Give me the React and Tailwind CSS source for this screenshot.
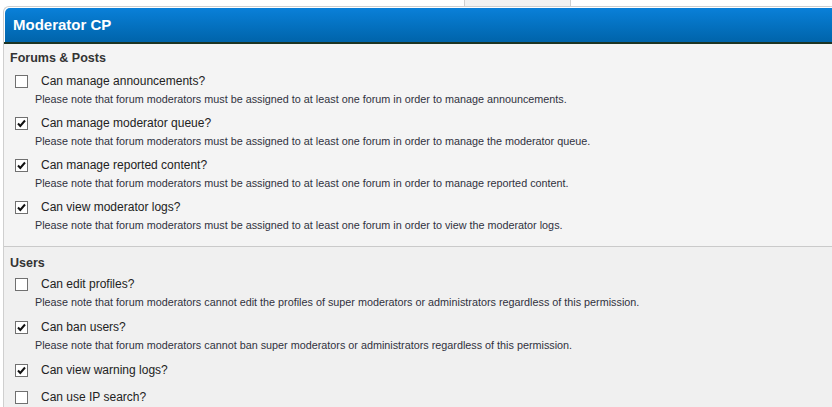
import React from "react";

function Box({ checked }) {
  return (
    <div className="w-[13px] h-[13px] border border-[#707070] bg-white shrink-0 flex items-center justify-center">
      {checked && (
        <svg width="11" height="11" viewBox="0 0 11 11">
          <path d="M2 5.5 L4.3 8 L9 2.5" fill="none" stroke="#111" strokeWidth="2" />
        </svg>
      )}
    </div>
  );
}

function Item({ label, desc, checked, gap }) {
  return (
    <div className={gap}>
      <div className="flex items-center h-[18px] pl-[11px]">
        <Box checked={checked} />
        <span className="ml-[13px] text-[12px] text-[#222]">{label}</span>
      </div>
      {desc && (
        <div className="h-[14px] mt-[2px] pl-[31px] text-[10.8px] leading-[14px] text-[#30323e]">{desc}</div>
      )}
    </div>
  );
}

const forum = [
  ["Can manage announcements?", "Please note that forum moderators must be assigned to at least one forum in order to manage announcements.", false],
  ["Can manage moderator queue?", "Please note that forum moderators must be assigned to at least one forum in order to manage the moderator queue.", true],
  ["Can manage reported content?", "Please note that forum moderators must be assigned to at least one forum in order to manage reported content.", true],
  ["Can view moderator logs?", "Please note that forum moderators must be assigned to at least one forum in order to view the moderator logs.", true],
];

const users = [
  ["Can edit profiles?", "Please note that forum moderators cannot edit the profiles of super moderators or administrators regardless of this permission.", false],
  ["Can ban users?", "Please note that forum moderators cannot ban super moderators or administrators regardless of this permission.", true],
  ["Can view warning logs?", null, true],
  ["Can use IP search?", null, false],
];

export default function App() {
  return (
    <div className="w-[832px] h-[407px] overflow-hidden bg-white font-['Liberation_Sans',Arial,sans-serif]">
      <div className="h-[6px] flex">
        <div className="ml-[464px] w-[107px] h-[6px] bg-[#f2f2f2] border-x border-[#d0d0d0]" />
      </div>
      <div className="ml-[3px] border-l border-t border-[#cfcfcf] rounded-tl-[6px] overflow-hidden">
        <div className="mt-[1px] ml-[1px] h-[34px] rounded-tl-[5px] bg-gradient-to-b from-[#0a80d9] to-[#0064aa] flex items-center pl-[8px] text-white font-bold text-[15px]">
          Moderator CP
        </div>
        <div className="h-[2px] bg-[#1d3524]" />
        <div className="bg-[#f4f4f4] pt-[6px] pb-[7px] border-b border-[#cacaca] h-[203px]">
          <div className="h-[16px] pl-[6px] text-[12.5px] leading-[16px] font-bold text-[#333]">Forums &amp; Posts</div>
          <div className="mt-[6px]">
            {forum.map(([l, d, c]) => (
              <Item key={l} label={l} desc={d} checked={c} gap="mb-[8px]" />
            ))}
          </div>
        </div>
        <div className="bg-[#f0f0f0] pt-[8px] h-[200px]">
          <div className="h-[16px] pl-[6px] text-[12.5px] leading-[16px] font-bold text-[#333]">Users</div>
          <div className="mt-[4px]">
            {users.map(([l, d, c]) => (
              <Item key={l} label={l} desc={d} checked={c} gap="mb-[9px]" />
            ))}
          </div>
        </div>
      </div>
    </div>
  );
}
